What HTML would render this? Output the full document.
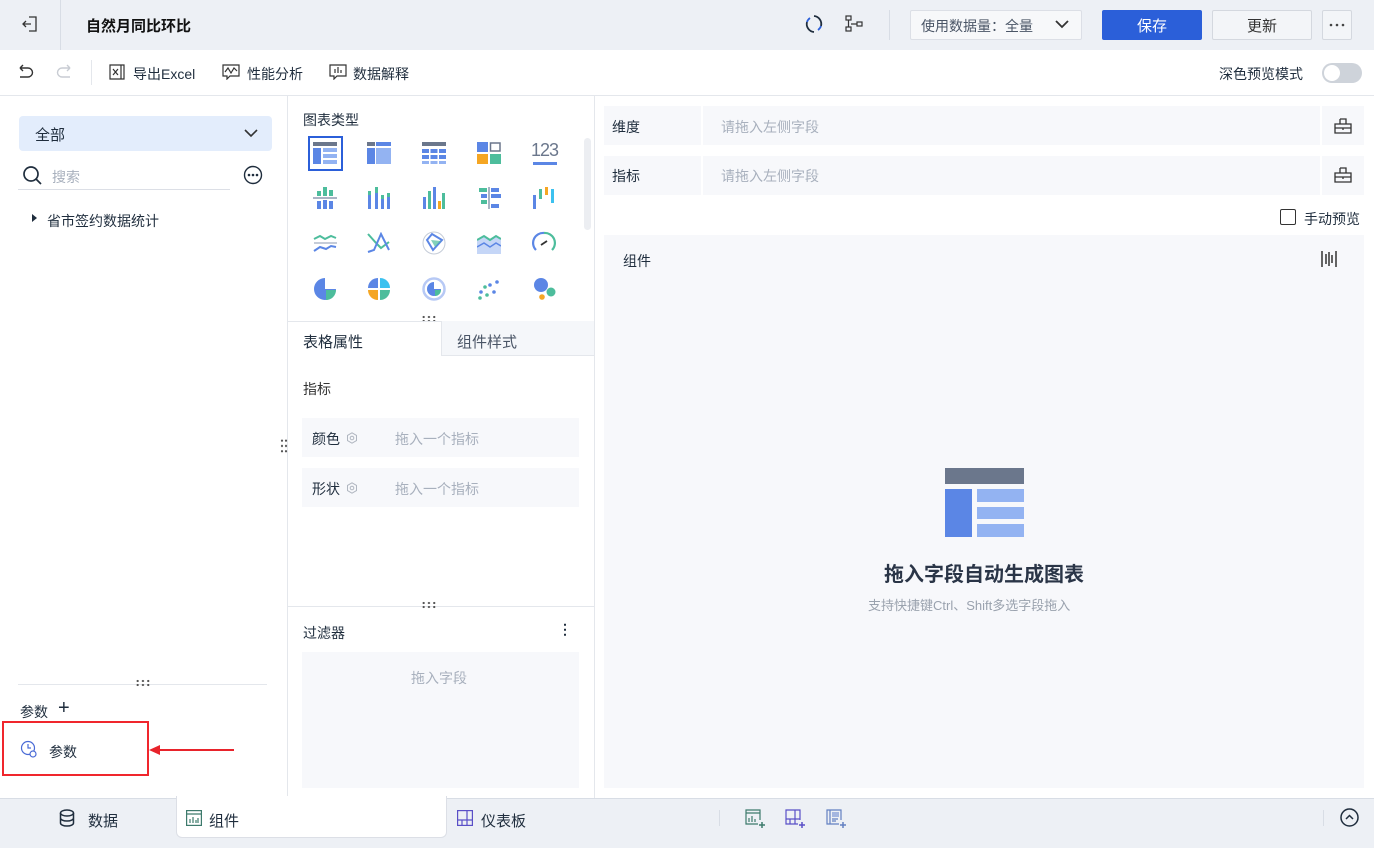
<!DOCTYPE html>
<html><head><meta charset="utf-8">
<style>
*{box-sizing:border-box;margin:0;padding:0}
body{width:1374px;height:848px;position:relative;overflow:hidden;background:#fff;font-family:"Liberation Sans","Noto Sans CJK SC",sans-serif;color:#1f2d3d;font-size:14px}
.a{position:absolute}
.t{position:absolute;white-space:nowrap}
svg{position:absolute}
.ph{color:#a8b0bd}
.dots{position:absolute;width:16px;height:8px;background:radial-gradient(circle,#555 0.9px,transparent 1.3px) 0 0/5.3px 4px}
</style></head><body>
<div class="a" style="left:0;top:0;width:1374px;height:50px;background:#edf0f5"></div>
<div class="a" style="left:60px;top:0;width:1px;height:50px;background:#d8dde5"></div>
<svg style="left:22px;top:14px" width="18" height="20" viewBox="0 0 18 20" fill="none" stroke="#333" stroke-width="1.3"><path d="M7 3h7v14H7M1 10h8M4 7l-3 3 3 3"/></svg>
<div class="t" style="left:86px;top:15px;font-size:15px;font-weight:bold;color:#111">自然月同比环比</div>
<svg style="left:804px;top:14px" width="20" height="20" viewBox="0 0 20 20" fill="none" stroke="#1f2d3d" stroke-width="1.8"><path d="M10 2a8 8 0 0 1 7 10M10 18a8 8 0 0 1-7-10"/><path d="M6 4a8 8 0 0 0-3 4M14 16a8 8 0 0 0 3-4" stroke="#2b5fd9"/></svg>
<svg style="left:845px;top:15px" width="18" height="18" viewBox="0 0 18 18" fill="none" stroke="#333" stroke-width="1.2"><rect x="1" y="1" width="5" height="4"/><rect x="1" y="12" width="5" height="4"/><rect x="12" y="7" width="5" height="4"/><path d="M3.5 5v7M6 9h6"/></svg>
<div class="a" style="left:889px;top:10px;width:1px;height:30px;background:#d8dde5"></div>
<div class="a" style="left:910px;top:10px;width:172px;height:30px;background:#f7f8fa;border:1px solid #dcdfe6;border-radius:2px"></div>
<div class="t" style="left:921px;top:16px;color:#4a5566">使用数据量：全量</div>
<svg style="left:1054px;top:17px" width="16" height="14" viewBox="0 0 16 14" fill="none" stroke="#333" stroke-width="1.8"><path d="M2 4l6 6 6-6"/></svg>
<div class="a" style="left:1102px;top:10px;width:100px;height:30px;background:#2b5fd9;border-radius:2px"></div>
<div class="t" style="left:1137px;top:15px;color:#fff;font-size:15px">保存</div>
<div class="a" style="left:1212px;top:10px;width:100px;height:30px;background:#f3f5f8;border:1px solid #d4d8df;border-radius:2px"></div>
<div class="t" style="left:1247px;top:15px;color:#333;font-size:15px">更新</div>
<div class="a" style="left:1322px;top:10px;width:30px;height:30px;background:#f3f5f8;border:1px solid #d4d8df;border-radius:2px"></div>
<svg style="left:1328px;top:23px" width="18" height="4" viewBox="0 0 18 4" fill="#444"><circle cx="3" cy="2" r="1.3"/><circle cx="9" cy="2" r="1.3"/><circle cx="15" cy="2" r="1.3"/></svg>
<div class="a" style="left:0;top:95px;width:1374px;height:1px;background:#e4e7ec"></div>
<svg style="left:15px;top:63px" width="20" height="18" viewBox="0 0 20 18" fill="none" stroke="#333" stroke-width="1.4"><path d="M5 5h8a4.5 4.5 0 0 1 0 9H5M5 5l3-3M5 5l3 3"/></svg>
<svg style="left:55px;top:63px" width="20" height="18" viewBox="0 0 20 18" fill="none" stroke="#c8ccd3" stroke-width="1.4"><path d="M15 5H7a4.5 4.5 0 0 0 0 9h8M15 5l-3-3M15 5l-3 3"/></svg>
<div class="a" style="left:91px;top:60px;width:1px;height:25px;background:#e4e7ec"></div>
<svg style="left:109px;top:64px" width="16" height="16" viewBox="0 0 16 16" fill="none" stroke="#333" stroke-width="1.2"><path d="M1 1h11v14H1zM12 1h3v14h-3M4 5l5 6M9 5l-5 6"/></svg>
<div class="t" style="left:133px;top:64px">导出Excel</div>
<svg style="left:222px;top:64px" width="18" height="16" viewBox="0 0 18 16" fill="none" stroke="#333" stroke-width="1.2"><path d="M1 1h16v11H8l-3 3v-3H1zM3 8l3-4 3 5 3-5 3 3"/></svg>
<div class="t" style="left:247px;top:64px">性能分析</div>
<svg style="left:329px;top:64px" width="18" height="16" viewBox="0 0 18 16" fill="none" stroke="#333" stroke-width="1.2"><path d="M1 1h16v11H8l-3 3v-3H1zM6 5v4M9 3v6M12 6v3"/></svg>
<div class="t" style="left:353px;top:64px">数据解释</div>
<div class="t" style="left:1219px;top:64px">深色预览模式</div>
<div class="a" style="left:1322px;top:63px;width:40px;height:20px;background:#ced3da;border-radius:10px"></div>
<div class="a" style="left:1324px;top:65px;width:16px;height:16px;background:#fff;border-radius:50%"></div>
<div class="a" style="left:287px;top:96px;width:1px;height:702px;background:#e4e7ec"></div>
<div class="a" style="left:594px;top:96px;width:1px;height:702px;background:#e4e7ec"></div>
<div class="a" style="left:19px;top:116px;width:253px;height:35px;background:#e3edfc;border-radius:4px"></div>
<div class="t" style="left:35px;top:124px;font-size:15px">全部</div>
<svg style="left:243px;top:126px" width="16" height="14" viewBox="0 0 16 14" fill="none" stroke="#333" stroke-width="1.6"><path d="M2 4l6 6 6-6"/></svg>
<svg style="left:22px;top:165px" width="22" height="22" viewBox="0 0 22 22" fill="none" stroke="#1f2d3d" stroke-width="1.7"><circle cx="9" cy="9" r="7"/><path d="M14 14l5 5"/></svg>
<div class="t ph" style="left:52px;top:167px">搜索</div>
<div class="a" style="left:18px;top:189px;width:212px;height:1px;background:#dcdfe6"></div>
<svg style="left:243px;top:165px" width="20" height="20" viewBox="0 0 20 20" fill="none" stroke="#1f2d3d" stroke-width="1.4"><circle cx="10" cy="10" r="8.5"/><circle cx="6" cy="10" r=".6" fill="#1f2d3d"/><circle cx="10" cy="10" r=".6" fill="#1f2d3d"/><circle cx="14" cy="10" r=".6" fill="#1f2d3d"/></svg>
<svg style="left:31px;top:213px" width="8" height="10" viewBox="0 0 8 10"><path d="M1 1l5 4-5 4z" fill="#1f2d3d"/></svg>
<div class="t" style="left:47px;top:211px">省市签约数据统计</div>
<div class="a" style="left:18px;top:684px;width:249px;height:1px;background:#e4e7ec"></div>
<div class="dots" style="left:135px;top:679px"></div>
<div class="t" style="left:20px;top:702px">参数</div>
<div class="t" style="left:58px;top:697px;font-size:20px">+</div>
<div class="a" style="left:2px;top:721px;width:147px;height:55px;border:2px solid #f0262d"></div>
<svg style="left:20px;top:740px" width="20" height="20" viewBox="0 0 20 20" fill="none" stroke="#4a6bd6" stroke-width="1.2"><circle cx="8" cy="8" r="6.5"/><path d="M8 4v4h3"/><circle cx="13" cy="14" r="3" fill="#fff"/></svg>
<div class="t" style="left:49px;top:742px">参数</div>
<div class="a" style="left:158px;top:749px;width:76px;height:2px;background:#e8232b"></div>
<svg style="left:149px;top:744px" width="12" height="12" viewBox="0 0 12 12"><path d="M0 6l11-5v10z" fill="#e8232b"/></svg>
<div class="t" style="left:303px;top:110px">图表类型</div>
<div class="a" style="left:584px;top:138px;width:7px;height:92px;background:#eceef2;border-radius:4px"></div>
<div class="a" style="left:308px;top:136px;width:35px;height:35px;border:2px solid #2b5fd9"></div>
<svg style="left:313px;top:142px" width="24" height="22" viewBox="0 0 24 22"><rect width="24" height="4" fill="#6b778c"/><rect y="6" width="8" height="16" fill="#5b86e5"/><rect x="10" y="6" width="14" height="4" fill="#93b3f2"/><rect x="10" y="12" width="14" height="4" fill="#93b3f2"/><rect x="10" y="18" width="14" height="4" fill="#93b3f2"/></svg>
<svg style="left:367px;top:142px" width="24" height="22" viewBox="0 0 24 22"><rect width="8" height="4" fill="#6b778c"/><rect x="9" width="15" height="4" fill="#5b86e5"/><rect y="6" width="8" height="16" fill="#5b86e5"/><rect x="9" y="6" width="15" height="16" fill="#93b3f2"/></svg>
<svg style="left:422px;top:142px" width="24" height="22" viewBox="0 0 24 22"><rect width="24" height="4" fill="#6b778c"/><g fill="#5b86e5"><rect y="7" width="7" height="4"/><rect x="8.5" y="7" width="7" height="4"/><rect x="17" y="7" width="7" height="4"/><rect y="13" width="7" height="4"/><rect x="8.5" y="13" width="7" height="4"/><rect x="17" y="13" width="7" height="4"/></g><g fill="#93b3f2"><rect y="19" width="7" height="3"/><rect x="8.5" y="19" width="7" height="3"/><rect x="17" y="19" width="7" height="3"/></g></svg>
<svg style="left:477px;top:142px" width="24" height="22" viewBox="0 0 24 22"><rect width="11" height="10" fill="#5b86e5"/><rect x="13.5" y="1" width="9.5" height="8" fill="none" stroke="#6b778c" stroke-width="1.5"/><rect y="12" width="11" height="10" fill="#f5a623"/><rect x="13" y="12" width="11" height="10" fill="#4dbd9c"/></svg>
<div class="t" style="left:531px;top:140px;font-size:18px;color:#6b778c;letter-spacing:-1px">123</div>
<div class="a" style="left:533px;top:162px;width:24px;height:3px;background:#5b86e5"></div>
<svg style="left:313px;top:187px" width="24" height="22" viewBox="0 0 24 22"><rect x="0" y="10" width="24" height="2" fill="#aab4c4"/><g fill="#4dbd9c"><rect x="4" y="4" width="4" height="5"/><rect x="10" y="0" width="4" height="9"/><rect x="16" y="3" width="4" height="6"/></g><g fill="#5b86e5"><rect x="4" y="14" width="4" height="8"/><rect x="10" y="13" width="4" height="9"/><rect x="16" y="14" width="4" height="8"/></g></svg>
<svg style="left:367px;top:187px" width="24" height="22" viewBox="0 0 24 22"><g fill="#5b86e5"><rect x="1" y="8" width="3" height="14"/><rect x="8" y="6" width="3" height="16"/><rect x="14" y="12" width="3" height="10"/><rect x="20" y="10" width="3" height="12"/></g><g fill="#4dbd9c"><rect x="1" y="4" width="3" height="4"/><rect x="8" y="0" width="3" height="6"/><rect x="14" y="8" width="3" height="4"/><rect x="20" y="6" width="3" height="4"/></g></svg>
<svg style="left:422px;top:187px" width="24" height="22" viewBox="0 0 24 22"><rect x="1" y="10" width="3" height="12" fill="#5b86e5"/><rect x="6" y="4" width="3" height="18" fill="#4dbd9c"/><rect x="11" y="0" width="3" height="22" fill="#5b86e5"/><rect x="16" y="14" width="3" height="8" fill="#f5a623"/><rect x="20" y="6" width="3" height="16" fill="#4dbd9c"/></svg>
<svg style="left:477px;top:187px" width="24" height="22" viewBox="0 0 24 22"><rect x="11" y="0" width="2" height="22" fill="#aab4c4"/><g fill="#4dbd9c"><rect x="2" y="1" width="8" height="4"/><rect x="4" y="13" width="6" height="4"/></g><g fill="#5b86e5"><rect x="14" y="1" width="8" height="4"/><rect x="14" y="7" width="10" height="4"/><rect x="14" y="17" width="8" height="4"/><rect x="4" y="7" width="6" height="4"/></g></svg>
<svg style="left:532px;top:187px" width="24" height="22" viewBox="0 0 24 22"><rect x="1" y="8" width="3" height="14" fill="#5b86e5"/><rect x="7" y="2" width="3" height="10" fill="#4dbd9c"/><rect x="13" y="0" width="3" height="8" fill="#f5a623"/><rect x="19" y="2" width="3" height="14" fill="#3cc1ef"/></svg>
<svg style="left:313px;top:232px" width="24" height="22" viewBox="0 0 24 22" fill="none" stroke-width="2"><path d="M1 7l6-3 5 3 6-3 5 2" stroke="#4dbd9c"/><path d="M1 11h23" stroke="#c5ccd8"/><path d="M1 19l6-4 6 2 5-3 5 1" stroke="#5b86e5"/></svg>
<svg style="left:367px;top:232px" width="24" height="22" viewBox="0 0 24 22" fill="none" stroke-width="2"><path d="M1 2l9 10 4 4 8-6" stroke="#4dbd9c"/><path d="M1 20l6-2 7-16 8 16" stroke="#5b86e5"/></svg>
<svg style="left:422px;top:231px" width="24" height="24" viewBox="0 0 24 24" fill="none"><circle cx="12" cy="12" r="11" stroke="#c5ccd8"/><path d="M5 9l5-6 10 6-9 10z" stroke="#5b86e5" stroke-width="2"/><path d="M9 9l10 1-6 6z" fill="#4dbd9c" opacity=".7"/></svg>
<svg style="left:477px;top:232px" width="24" height="22" viewBox="0 0 24 22"><path d="M0 8l7-4 6 4 6-4 5 3v15H0z" fill="#c5d6f7"/><path d="M0 8l7-4 6 4 6-4 5 3" fill="none" stroke="#4dbd9c" stroke-width="2"/><path d="M0 15l7-4 6 4 6-4 5 3" fill="none" stroke="#5b86e5" stroke-width="1.5"/></svg>
<svg style="left:532px;top:231px" width="24" height="24" viewBox="0 0 24 24" fill="none" stroke-width="2.2"><path d="M4 19A10 10 0 0 1 12 2" stroke="#5b86e5"/><path d="M12 2a10 10 0 0 1 8 17" stroke="#4dbd9c"/><path d="M9 14l6-4" stroke="#333" stroke-width="1.8"/></svg>
<svg style="left:313px;top:277px" width="24" height="24" viewBox="0 0 24 24"><path d="M12 12V1A11 11 0 1 0 23 12z" fill="#5b86e5"/><path d="M13 13h10a10 10 0 0 1-10 10z" fill="#4dbd9c"/></svg>
<svg style="left:367px;top:277px" width="24" height="24" viewBox="0 0 24 24"><path d="M11 11V1A10 10 0 0 0 1 11z" fill="#5b86e5"/><path d="M13 11V1a10 10 0 0 1 10 10z" fill="#3cc1ef"/><path d="M11 13H1a10 10 0 0 0 10 10z" fill="#f5a623"/><path d="M13 13h10a10 10 0 0 1-10 10z" fill="#4dbd9c"/></svg>
<svg style="left:422px;top:277px" width="24" height="24" viewBox="0 0 24 24" fill="none"><circle cx="12" cy="12" r="10.5" stroke="#b7c9f5" stroke-width="2.5"/><path d="M12 12V5a7 7 0 1 0 7 7z" fill="#5b86e5"/><path d="M13 13h6a6 6 0 0 1-6 6z" fill="#4dbd9c"/></svg>
<svg style="left:477px;top:277px" width="24" height="24" viewBox="0 0 24 24"><g fill="#5b86e5"><circle cx="4" cy="15" r="1.8"/><circle cx="13" cy="8" r="1.8"/><circle cx="20" cy="5" r="1.8"/><circle cx="17" cy="15" r="1.8"/></g><g fill="#4dbd9c"><circle cx="3" cy="21" r="1.8"/><circle cx="10" cy="18" r="1.8"/><circle cx="8" cy="10" r="1.8"/></g></svg>
<svg style="left:532px;top:277px" width="26" height="26" viewBox="0 0 26 26"><circle cx="9" cy="8" r="7" fill="#5b86e5"/><circle cx="19" cy="15" r="4.5" fill="#4dbd9c"/><circle cx="10" cy="20" r="2.8" fill="#f5a623"/></svg>
<div class="dots" style="left:421px;top:315px"></div>
<div class="a" style="left:288px;top:321px;width:306px;height:1px;background:#e4e7ec"></div>
<div class="a" style="left:441px;top:321px;width:153px;height:35px;background:#f5f7fa;border-left:1px solid #e4e7ec;border-bottom:1px solid #e4e7ec"></div>
<div class="t" style="left:303px;top:331px;font-size:15px">表格属性</div>
<div class="t" style="left:457px;top:331px;font-size:15px;color:#4a5566">组件样式</div>
<div class="t" style="left:303px;top:379px;color:#333">指标</div>
<div class="dots" style="left:280px;top:438px;width:8px;height:16px;background-size:4px 5.3px"></div>
<div class="a" style="left:302px;top:418px;width:277px;height:39px;background:#f7f8fb"></div>
<div class="t" style="left:312px;top:429px">颜色</div>
<svg style="left:346px;top:432px" width="12" height="12" viewBox="0 0 12 12" fill="none" stroke="#b0b6c0"><path d="M6 .8l4.5 2.6v5.2L6 11.2 1.5 8.6V3.4z"/><circle cx="6" cy="6" r="1.8"/></svg>
<div class="t ph" style="left:395px;top:429px">拖入一个指标</div>
<div class="a" style="left:302px;top:468px;width:277px;height:39px;background:#f7f8fb"></div>
<div class="t" style="left:312px;top:479px">形状</div>
<svg style="left:346px;top:482px" width="12" height="12" viewBox="0 0 12 12" fill="none" stroke="#b0b6c0"><path d="M6 .8l4.5 2.6v5.2L6 11.2 1.5 8.6V3.4z"/><circle cx="6" cy="6" r="1.8"/></svg>
<div class="t ph" style="left:395px;top:479px">拖入一个指标</div>
<div class="a" style="left:288px;top:606px;width:306px;height:1px;background:#e4e7ec"></div>
<div class="dots" style="left:421px;top:601px"></div>
<div class="t" style="left:303px;top:623px">过滤器</div>
<div class="t" style="left:558px;top:621px;font-weight:bold">⋮</div>
<div class="a" style="left:302px;top:652px;width:277px;height:136px;background:#f7f8fb"></div>
<div class="t ph" style="left:411px;top:668px">拖入字段</div>
<div class="a" style="left:604px;top:106px;width:760px;height:39px;background:#f7f8fb"></div>
<div class="a" style="left:701px;top:106px;width:2px;height:39px;background:#fff"></div>
<div class="a" style="left:1320px;top:106px;width:2px;height:39px;background:#fff"></div>
<div class="t" style="left:612px;top:117px">维度</div>
<div class="t ph" style="left:721px;top:117px">请拖入左侧字段</div>
<div class="a" style="left:604px;top:156px;width:760px;height:39px;background:#f7f8fb"></div>
<div class="a" style="left:701px;top:156px;width:2px;height:39px;background:#fff"></div>
<div class="a" style="left:1320px;top:156px;width:2px;height:39px;background:#fff"></div>
<div class="t" style="left:612px;top:166px">指标</div>
<div class="t ph" style="left:721px;top:166px">请拖入左侧字段</div>
<svg style="left:1334px;top:117px" width="18" height="18" viewBox="0 0 18 18" fill="none" stroke="#333" stroke-width="1.3"><path d="M6 2h6v5M6 2v5M1 7h16v9H1zM1 11h16M9 11v2"/></svg>
<svg style="left:1334px;top:166px" width="18" height="18" viewBox="0 0 18 18" fill="none" stroke="#333" stroke-width="1.3"><path d="M6 2h6v5M6 2v5M1 7h16v9H1zM1 11h16M9 11v2"/></svg>
<div class="a" style="left:1280px;top:209px;width:16px;height:16px;border:1.3px solid #333;border-radius:2px"></div>
<div class="t" style="left:1304px;top:209px">手动预览</div>
<div class="a" style="left:604px;top:235px;width:760px;height:553px;background:#f7f8fb"></div>
<div class="t" style="left:623px;top:251px">组件</div>
<svg style="left:1320px;top:250px" width="18" height="18" viewBox="0 0 18 18" stroke="#333" stroke-width="1.5"><path d="M2 1v16M16 1v16M6 4v10M9 2v14M12 5v8"/></svg>
<svg style="left:945px;top:468px" width="79" height="69" viewBox="0 0 79 69"><rect width="79" height="16" fill="#6b778c"/><rect y="21" width="27" height="48" fill="#5b86e5"/><rect x="32" y="21" width="47" height="13" fill="#93b3f2"/><rect x="32" y="39" width="47" height="12" fill="#93b3f2"/><rect x="32" y="56" width="47" height="13" fill="#93b3f2"/></svg>
<div class="t" style="left:884px;top:558px;font-size:20px;font-weight:bold;color:#2a3547">拖入字段自动生成图表</div>
<div class="t" style="left:868px;top:595px;font-size:13px;color:#9aa2ae">支持快捷键Ctrl、Shift多选字段拖入</div>
<div class="a" style="left:0;top:798px;width:1374px;height:50px;background:#edf0f5;border-top:1px solid #d8dde5"></div>
<div class="a" style="left:176px;top:796px;width:271px;height:42px;background:#fff;border-radius:0 0 6px 6px;border:1px solid #dcdfe6;border-top:none"></div>
<svg style="left:59px;top:809px" width="16" height="18" viewBox="0 0 16 18" fill="none" stroke="#1f2d3d" stroke-width="1.5"><ellipse cx="8" cy="4" rx="6.5" ry="3"/><path d="M1.5 4v10c0 1.7 2.9 3 6.5 3s6.5-1.3 6.5-3V4M1.5 9c0 1.7 2.9 3 6.5 3s6.5-1.3 6.5-3"/></svg>
<div class="t" style="left:88px;top:810px;font-size:15px">数据</div>
<svg style="left:186px;top:810px" width="16" height="16" viewBox="0 0 16 16" fill="none" stroke="#3d7a6c" stroke-width="1.2"><rect x=".6" y=".6" width="14.8" height="14.8"/><path d="M1 4h14M4 13V9M7 13V7M10 13V10M12 13V8"/></svg>
<div class="t" style="left:209px;top:810px;font-size:15px">组件</div>
<svg style="left:457px;top:810px" width="16" height="16" viewBox="0 0 16 16" fill="none" stroke="#5a4fc7" stroke-width="1.2"><rect x=".6" y=".6" width="14.8" height="14.8"/><path d="M10 1v14M1 10h14M5 10v5"/></svg>
<div class="t" style="left:481px;top:810px;font-size:15px">仪表板</div>
<div class="a" style="left:719px;top:810px;width:1px;height:16px;background:#d8dde5"></div>
<svg style="left:745px;top:809px" width="22" height="20" viewBox="0 0 22 20" fill="none" stroke="#3d7a6c" stroke-width="1.2"><path d="M13 15H1V1h14v10M1 4h14M4 13V9M7 13V7M10 13V10"/><path d="M17 13v6M14 16h6" stroke-width="1.5"/></svg>
<svg style="left:785px;top:809px" width="22" height="20" viewBox="0 0 22 20" fill="none" stroke="#5a4fc7" stroke-width="1.2"><path d="M13 15H1V1h14v10M10 1v14M1 10h14M5 10v5"/><path d="M17 13v6M14 16h6" stroke-width="1.5"/></svg>
<svg style="left:826px;top:809px" width="22" height="20" viewBox="0 0 22 20" fill="none" stroke="#6380c2" stroke-width="1.2"><path d="M13 15H1V1h14v10M4 1v14"/><rect x="6" y="3" width="7" height="5" fill="#a4b6e0" stroke="none"/><path d="M6 10h6M6 12h4"/><path d="M17 13v6M14 16h6" stroke-width="1.5"/></svg>
<div class="a" style="left:1323px;top:810px;width:1px;height:16px;background:#d8dde5"></div>
<svg style="left:1340px;top:808px" width="19" height="19" viewBox="0 0 19 19" fill="none" stroke="#1f2d3d" stroke-width="1.5"><circle cx="9.5" cy="9.5" r="8.5"/><path d="M6 11l3.5-3.5L13 11"/></svg>
</body></html>
